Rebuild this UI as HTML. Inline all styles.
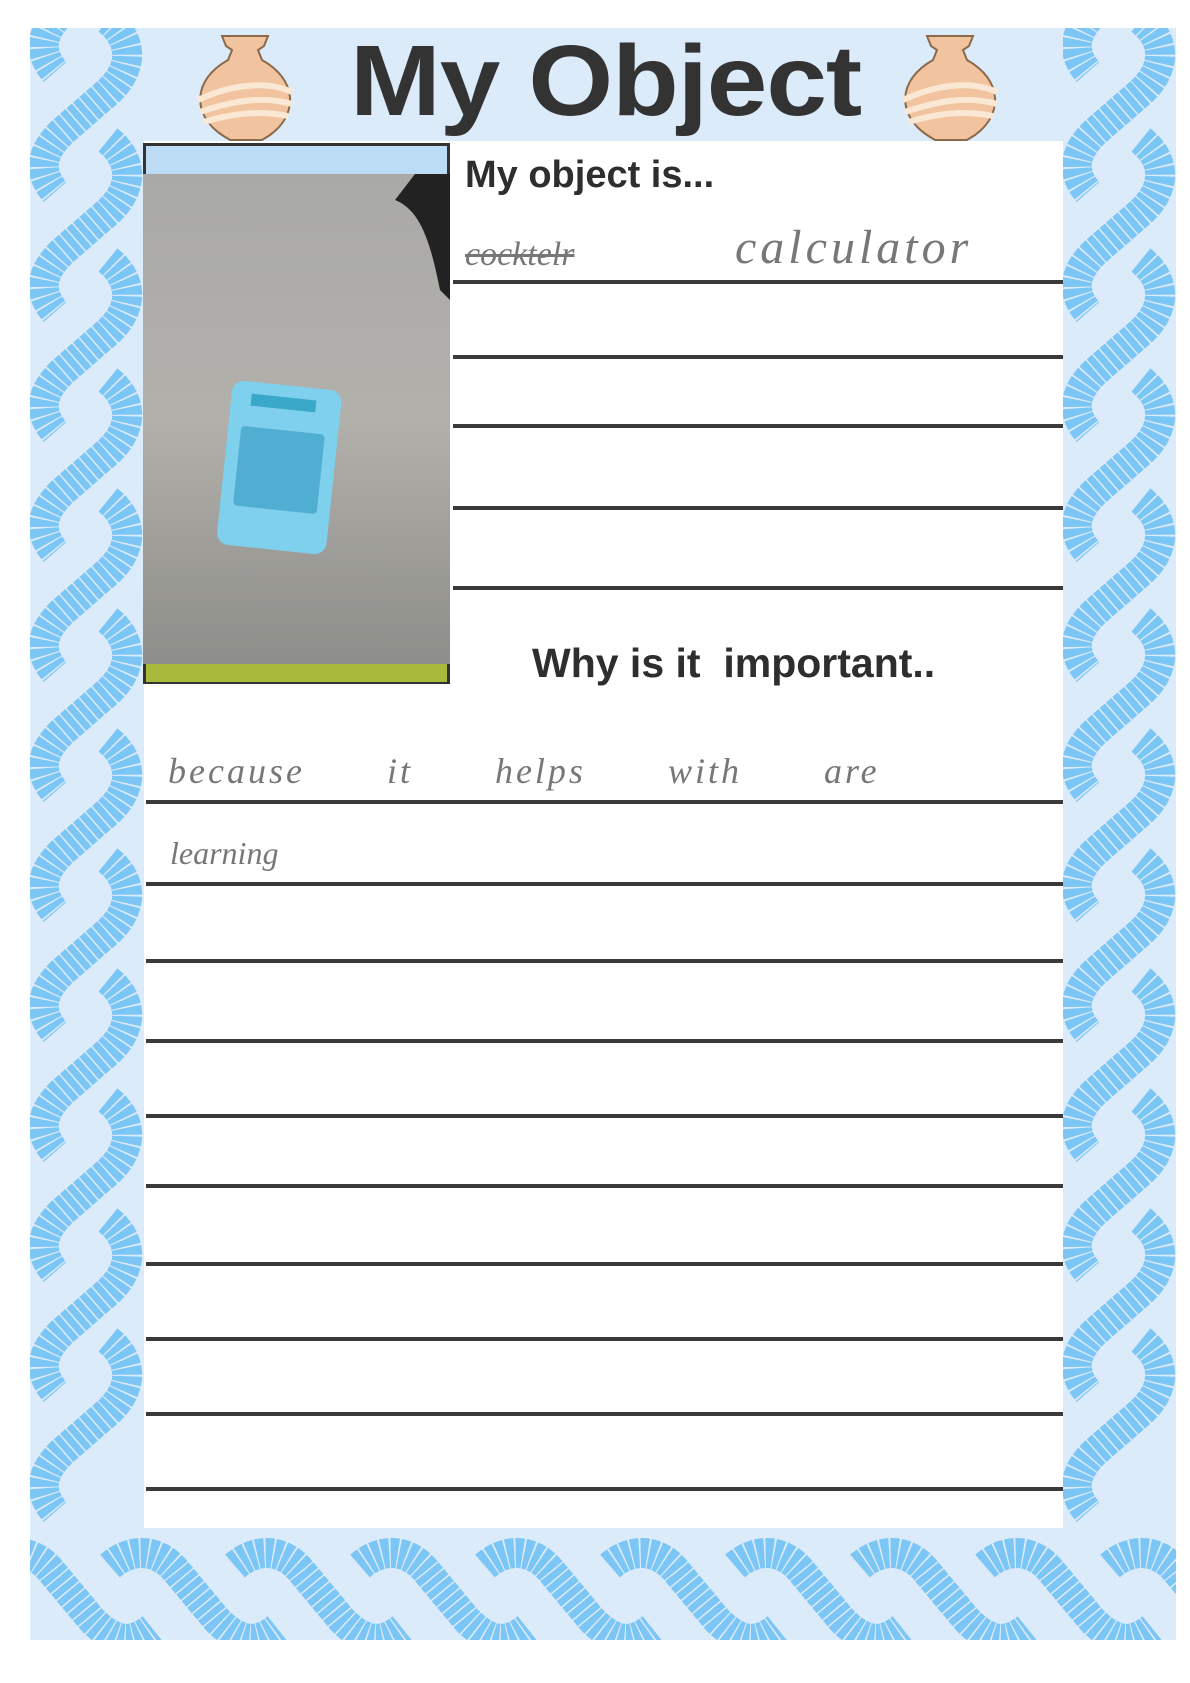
<!DOCTYPE html>
<html><head><meta charset="utf-8"><style>
html,body{margin:0;padding:0;background:#fff;}
body{width:1190px;height:1683px;position:relative;overflow:hidden;font-family:"Liberation Sans",sans-serif;}
.abs{position:absolute;}
.line{position:absolute;height:4px;background:#3a3a3a;}
.hw{position:absolute;font-family:"Liberation Serif",serif;font-style:italic;color:#777;}
</style></head><body>
<svg class="abs" style="left:0;top:0" width="1190" height="1683">
<defs>
<path id="segV" d="M108 0 C135 22,132 50,108 72 L62 112 C38 135,40 155,55 172" fill="none" stroke="#7cc6f6" stroke-width="30" stroke-dasharray="7 1.5"/>
<path id="segH" d="M5 18 C28 -2,55 2,72 24 L112 72 C135 95,152 96,172 80" fill="none" stroke="#7cc6f6" stroke-width="30" stroke-dasharray="7 1.5"/>
<clipPath id="cl"><rect x="30" y="28" width="113" height="1500"/></clipPath>
<clipPath id="cr"><rect x="1063" y="28" width="113" height="1500"/></clipPath>
<clipPath id="cb"><rect x="30" y="1528" width="1146" height="112"/></clipPath>
</defs>
<rect x="30" y="28" width="1146" height="1612" fill="#dcebf9"/>
<g clip-path="url(#cl)">
<use href="#segV" x="0" y="-100"/><use href="#segV" x="0" y="20"/><use href="#segV" x="0" y="140"/><use href="#segV" x="0" y="260"/><use href="#segV" x="0" y="380"/><use href="#segV" x="0" y="500"/><use href="#segV" x="0" y="620"/><use href="#segV" x="0" y="740"/><use href="#segV" x="0" y="860"/><use href="#segV" x="0" y="980"/><use href="#segV" x="0" y="1100"/><use href="#segV" x="0" y="1220"/><use href="#segV" x="0" y="1340"/>
</g>
<g clip-path="url(#cr)">
<use href="#segV" x="1033" y="-100"/><use href="#segV" x="1033" y="20"/><use href="#segV" x="1033" y="140"/><use href="#segV" x="1033" y="260"/><use href="#segV" x="1033" y="380"/><use href="#segV" x="1033" y="500"/><use href="#segV" x="1033" y="620"/><use href="#segV" x="1033" y="740"/><use href="#segV" x="1033" y="860"/><use href="#segV" x="1033" y="980"/><use href="#segV" x="1033" y="1100"/><use href="#segV" x="1033" y="1220"/><use href="#segV" x="1033" y="1340"/>
</g>
<g clip-path="url(#cb)">
<use href="#segH" x="-20" y="1548"/><use href="#segH" x="105" y="1548"/><use href="#segH" x="230" y="1548"/><use href="#segH" x="355" y="1548"/><use href="#segH" x="480" y="1548"/><use href="#segH" x="605" y="1548"/><use href="#segH" x="730" y="1548"/><use href="#segH" x="855" y="1548"/><use href="#segH" x="980" y="1548"/><use href="#segH" x="1105" y="1548"/>
</g>
<rect x="144" y="141" width="919" height="1387" fill="#fff"/>
<g id="jar">
<path d="M222 36 L268 36 L264 46 L258 50 L262 60 C298 80,298 115,270 135 L262 140 L230 140 L222 135 C192 115,192 80,228 60 L232 50 L226 46 Z" fill="#f2c39f" stroke="#8a6a4a" stroke-width="2"/>
<path d="M198 100 C230 85,265 80,292 92 M200 112 C235 100,265 96,292 104 M204 122 C230 114,260 110,288 116" stroke="#fbe8d4" stroke-width="6" fill="none"/>
</g>
<use href="#jar" x="705" y="0"/>
<rect x="143" y="143" width="307" height="541" fill="#333"/>
<rect x="146" y="146" width="301" height="28" fill="#bcdcf5"/>
<defs><linearGradient id="pg" x1="0" y1="0" x2="0" y2="1"><stop offset="0" stop-color="#a9a9a7"/><stop offset=".5" stop-color="#b2b0ab"/><stop offset="1" stop-color="#8d8d89"/></linearGradient></defs>
<rect x="143" y="174" width="307" height="490" fill="url(#pg)"/>
<path d="M415 174 L450 174 L450 300 L440 290 C430 240,420 210,395 200 Z" fill="#222"/>
<rect x="146" y="664" width="301" height="18" fill="#a8ba3c"/>
<g transform="rotate(6 280 460)">
<rect x="225" y="385" width="110" height="165" rx="12" fill="#7fd0ec"/>
<rect x="245" y="397" width="65" height="12" fill="#3aa8c8"/>
<rect x="238" y="430" width="84" height="80" rx="4" fill="#3aa0c6" opacity=".7"/>
</g>
</svg>
<div class="abs" style="left:350px;top:24px;font-size:100px;font-weight:bold;color:#333;letter-spacing:-1px;white-space:nowrap;transform:scaleX(1.09);transform-origin:left;">My Object</div>
<div class="abs" style="left:465px;top:154px;font-size:38px;font-weight:bold;color:#2e2e2e;white-space:nowrap">My object is...</div>
<div class="abs" style="left:532px;top:640px;font-size:41px;font-weight:bold;color:#2e2e2e;white-space:nowrap">Why is it&nbsp; important..</div>
<div class="hw" style="left:465px;top:236px;font-size:34px;text-decoration:line-through">cocktelr</div>
<div class="hw" style="left:735px;top:220px;font-size:48px;letter-spacing:4px">calculator</div>
<div class="hw" style="left:168px;top:750px;font-size:36px;word-spacing:70px;letter-spacing:3px">because it helps with are</div>
<div class="hw" style="left:170px;top:835px;font-size:32px">learning</div>
<div class="line" style="left:453px;top:280px;width:610px"></div>
<div class="line" style="left:453px;top:355px;width:610px"></div>
<div class="line" style="left:453px;top:424px;width:610px"></div>
<div class="line" style="left:453px;top:506px;width:610px"></div>
<div class="line" style="left:453px;top:586px;width:610px"></div>
<div class="line" style="left:146px;top:800px;width:917px"></div>
<div class="line" style="left:146px;top:882px;width:917px"></div>
<div class="line" style="left:146px;top:959px;width:917px"></div>
<div class="line" style="left:146px;top:1039px;width:917px"></div>
<div class="line" style="left:146px;top:1114px;width:917px"></div>
<div class="line" style="left:146px;top:1184px;width:917px"></div>
<div class="line" style="left:146px;top:1262px;width:917px"></div>
<div class="line" style="left:146px;top:1337px;width:917px"></div>
<div class="line" style="left:146px;top:1412px;width:917px"></div>
<div class="line" style="left:146px;top:1487px;width:917px"></div>
</body></html>
